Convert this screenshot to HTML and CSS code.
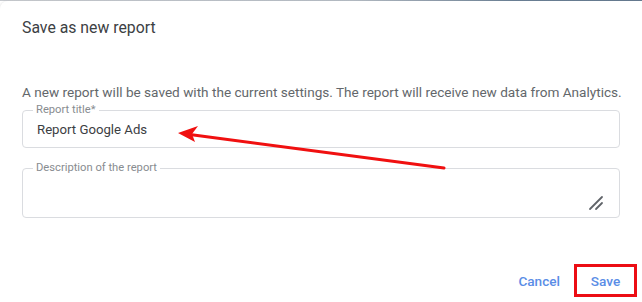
FILE: index.html
```html
<!DOCTYPE html>
<html lang="en">
<head>
<meta charset="utf-8">
<title>Save as new report</title>
<link rel="stylesheet" href="styles.css">
</head>
<body>
<div class="topstrip"></div>
<div class="dialog">
  <h1 class="title">Save as new report</h1>
  <p class="desc">A new report will be saved with the current settings. The report will receive new data from Analytics.</p>
  <fieldset class="field field-title">
    <legend>Report title*</legend>
    <div class="value">Report Google Ads</div>
  </fieldset>
  <fieldset class="field field-desc">
    <legend>Description of the report</legend>
    <div class="area">
      <svg class="resize" width="16" height="16" viewBox="0 0 16 16" aria-hidden="true">
        <line x1="2" y1="14" x2="14" y2="2" stroke="#5f6368" stroke-width="1.8" stroke-linecap="round"/>
        <line x1="8" y1="14" x2="14" y2="8" stroke="#5f6368" stroke-width="1.8" stroke-linecap="round"/>
      </svg>
    </div>
  </fieldset>
  <div class="actions">
    <button class="btn">Cancel</button>
    <div class="highlight"><button class="btn">Save</button></div>
  </div>
</div>
<svg class="arrow" width="642" height="302" viewBox="0 0 642 302" aria-hidden="true">
  <line x1="444" y1="168" x2="186" y2="134" stroke="#f01010" stroke-width="3" stroke-linecap="round"/>
  <polygon points="178,133 198,126 192,134 195,142" fill="#f01010"/>
</svg>
</body>
</html>
```
FILE: styles.css
```css
html, body {
  margin: 0;
  padding: 0;
}
body {
  width: 642px;
  height: 302px;
  background: #ffffff;
  font-family: Roboto, "Noto Sans", "Liberation Sans", sans-serif;
  position: relative;
  overflow: hidden;
}
.topstrip {
  height: 1px;
  background: linear-gradient(to right, #c7cacf 0%, #b5bcc4 55%, #6c8196 80%, #667b90 100%);
}
.dialog {
  background: #ffffff;
  border-top-left-radius: 8px;
  padding: 0 22px 0 22px;
  box-shadow: -1px 0 2px rgba(0,0,0,0.08);
  height: 301px;
  box-sizing: border-box;
}
.title {
  margin: 0;
  padding-top: 17px;
  font-size: 15.8px;
  line-height: 20px;
  font-weight: 400;
  color: #3c4043;
}
.desc {
  margin: 45px 0 0 0;
  font-size: 13.6px;
  line-height: 18px;
  color: #63676b;
  white-space: nowrap;
}
.field {
  margin: 0;
  border: 1px solid #dadce0;
  border-radius: 4px;
  padding: 0 14px;
  min-width: 0;
}
.field legend {
  font-size: 11.2px;
  line-height: 12px;
  color: #888c90;
  padding: 0 3px;
  margin-left: -4px;
}
.field-title {
  margin-top: 3px;
  padding-top: 4px;
  padding-bottom: 8px;
}
.value {
  font-size: 13.2px;
  line-height: 19px;
  color: #3c4043;
}
.field-desc {
  margin-top: 14px;
  padding-right: 16px;
}
.area {
  height: 43px;
  display: flex;
  justify-content: flex-end;
  align-items: flex-end;
}
.resize {
  margin-bottom: 6px;
  margin-right: -1px;
}
.actions {
  display: flex;
  justify-content: flex-end;
  align-items: center;
  gap: 7px;
  margin-top: 46px;
  margin-right: -17px;
}
.btn {
  background: none;
  border: none;
  padding: 0 7px;
  font-family: Roboto, "Noto Sans", "Liberation Sans", sans-serif;
  font-size: 13.6px;
  font-weight: 500;
  color: #5a8de6;
  line-height: 18px;
  cursor: pointer;
}
.highlight {
  width: 63px;
  height: 33px;
  box-sizing: border-box;
  border: 3px solid #ec0d14;
  display: flex;
  align-items: center;
  justify-content: center;
}
.arrow {
  position: absolute;
  left: 0;
  top: 0;
  pointer-events: none;
}
```
